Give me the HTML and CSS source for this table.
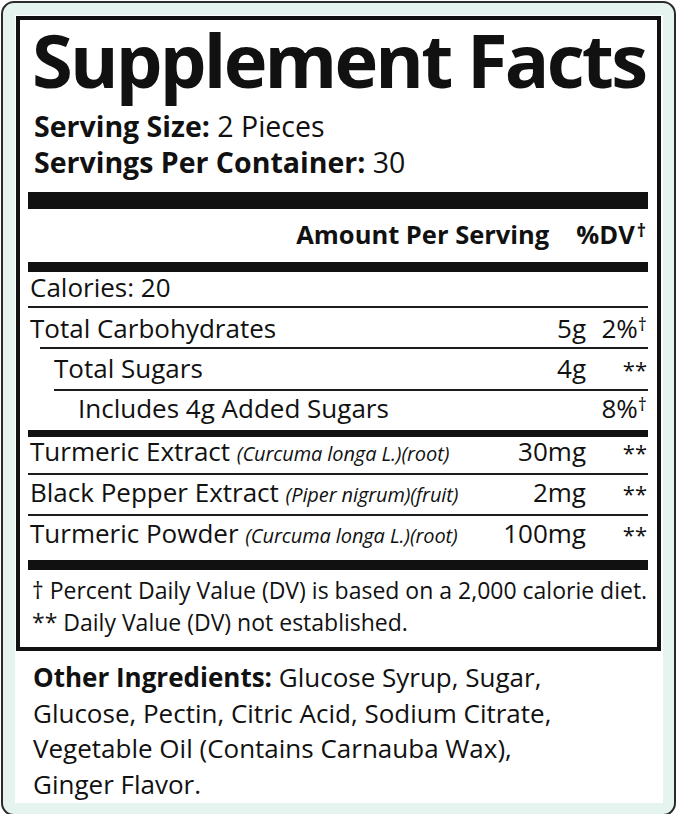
FILE: index.html
```html
<!DOCTYPE html>
<html lang="en">
<head>
<meta charset="utf-8">
<title>Supplement Facts</title>
<link rel="stylesheet" href="styles.css">
</head>
<body>
<div class="card">
  <div class="panel">
    <div class="facts">
      <h1 class="title">Supplement Facts</h1>
      <div class="serving s1"><b>Serving Size:</b> <span class="reg">2 Pieces</span></div>
      <div class="serving"><b>Servings Per Container:</b> <span class="reg">30</span></div>
      <div class="bar bar-xl"></div>
      <div class="head"><span>Amount Per Serving</span><span>%DV<sup class="dag hd">†</sup></span></div>
      <div class="bar bar-l"></div>

      <div class="row r-cal"><span class="name">Calories: 20</span><span class="amt"></span><span class="dv"></span></div>
      <div class="rule"></div>
      <div class="row r-carb"><span class="name">Total Carbohydrates</span><span class="amt">5g</span><span class="dv">2%<sup class="dag">†</sup></span></div>
      <div class="rule ind1"></div>
      <div class="row r-sug sub1"><span class="name">Total Sugars</span><span class="amt">4g</span><span class="dv"><span class="ast">**</span></span></div>
      <div class="rule ind2"></div>
      <div class="row r-add sub2"><span class="name">Includes 4g Added Sugars</span><span class="amt"></span><span class="dv">8%<sup class="dag">†</sup></span></div>
      <div class="bar bar-m"></div>

      <div class="row r-tur"><span class="name">Turmeric Extract <i class="sci">(Curcuma longa L.)(root)</i></span><span class="amt">30mg</span><span class="dv"><span class="ast">**</span></span></div>
      <div class="rule"></div>
      <div class="row r-pep"><span class="name">Black Pepper Extract <i class="sci">(Piper nigrum)(fruit)</i></span><span class="amt">2mg</span><span class="dv"><span class="ast">**</span></span></div>
      <div class="rule"></div>
      <div class="row r-pow"><span class="name">Turmeric Powder <i class="sci">(Curcuma longa L.)(root)</i></span><span class="amt">100mg</span><span class="dv"><span class="ast">**</span></span></div>
      <div class="bar bar-l2"></div>

      <div class="foot f1">† Percent Daily Value (DV) is based on a 2,000 calorie diet.</div>
      <div class="foot">** Daily Value (DV) not established.</div>
    </div>
    <p class="other"><b>Other Ingredients:</b> Glucose Syrup, Sugar,<br>Glucose, Pectin, Citric Acid, Sodium Citrate,<br>Vegetable Oil (Contains Carnauba Wax),<br>Ginger Flavor.</p>
  </div>
</div>
</body>
</html>
```

FILE: styles.css
```css
html, body {
  margin: 0;
  padding: 0;
  background: #ffffff;
}

body {
  font-family: "Open Sans", "Noto Sans", sans-serif;
  color: #111111;
}

.card {
  margin: 1px;
  width: 675px;
  box-sizing: border-box;
  border: 2px solid #2b2b2b;
  border-radius: 13px;
  background: #e5f4ef;
  padding: 12px 11px 11px 12px;
}

.panel {
  background: #ffffff;
  padding: 1px 2px 1px 1px;
}

.facts {
  border: 4px solid #111111;
  padding: 0 9px 9px 8px;
}

.title {
  margin: 0;
  padding-left: 4px;
  font-size: 74px;
  font-weight: 700;
  line-height: 80px;
  letter-spacing: -2.8px;
  white-space: nowrap;
}

.serving {
  font-size: 28.5px;
  line-height: 36px;
  padding-left: 6px;
  white-space: nowrap;
}

.serving b {
  font-weight: 700;
}

.s1 {
  padding-top: 8px;
}

.bar {
  background: #111111;
}

.bar-xl {
  height: 17px;
  margin-top: 12px;
}

.bar-l {
  height: 10px;
}

.bar-m {
  height: 7px;
}

.bar-l2 {
  height: 10px;
}

.head {
  display: flex;
  justify-content: flex-end;
  gap: 27px;
  font-size: 25.5px;
  font-weight: 700;
  line-height: 34px;
  padding: 8px 2px 11px 0;
}

.row {
  display: grid;
  grid-template-columns: 1fr auto 62px;
  font-size: 26px;
  line-height: 30px;
  padding-left: 2px;
  white-space: nowrap;
}

.amt,
.dv {
  text-align: right;
}

.dv {
  padding-right: 1px;
}

.rule {
  height: 2px;
  background: #1c1c1c;
}

.ind1 {
  margin-left: 12px;
}

.ind2 {
  margin-left: 26px;
}

.sub1 {
  padding-left: 26px;
}

.sub2 {
  padding-left: 50px;
}

.r-cal { padding-bottom: 4px; }
.r-carb { padding-top: 5px; padding-bottom: 4px; }
.r-sug { padding-top: 4px; padding-bottom: 5px; }
.r-add { padding-top: 2px; padding-bottom: 7px; }
.r-tur { line-height: 28px; padding-bottom: 7px; }
.r-pep { padding-top: 2px; padding-bottom: 6px; }
.r-pow { padding-top: 2px; padding-bottom: 11px; }

.sci {
  font-style: italic;
  font-size: 20px;
  line-height: 20px;
  letter-spacing: -0.1px;
}

.ast {
  font-size: 22px;
}

.dag {
  font-size: 18px;
  line-height: 0;
  vertical-align: 7px;
}

.hd {
  margin-left: 2px;
}

.foot {
  font-size: 23px;
  line-height: 32px;
  padding-left: 4px;
  white-space: nowrap;
}

.f1 {
  padding-top: 4px;
}

.other {
  margin: 9px 0 0;
  padding-left: 17px;
  font-size: 26px;
  line-height: 35.5px;
}
```
